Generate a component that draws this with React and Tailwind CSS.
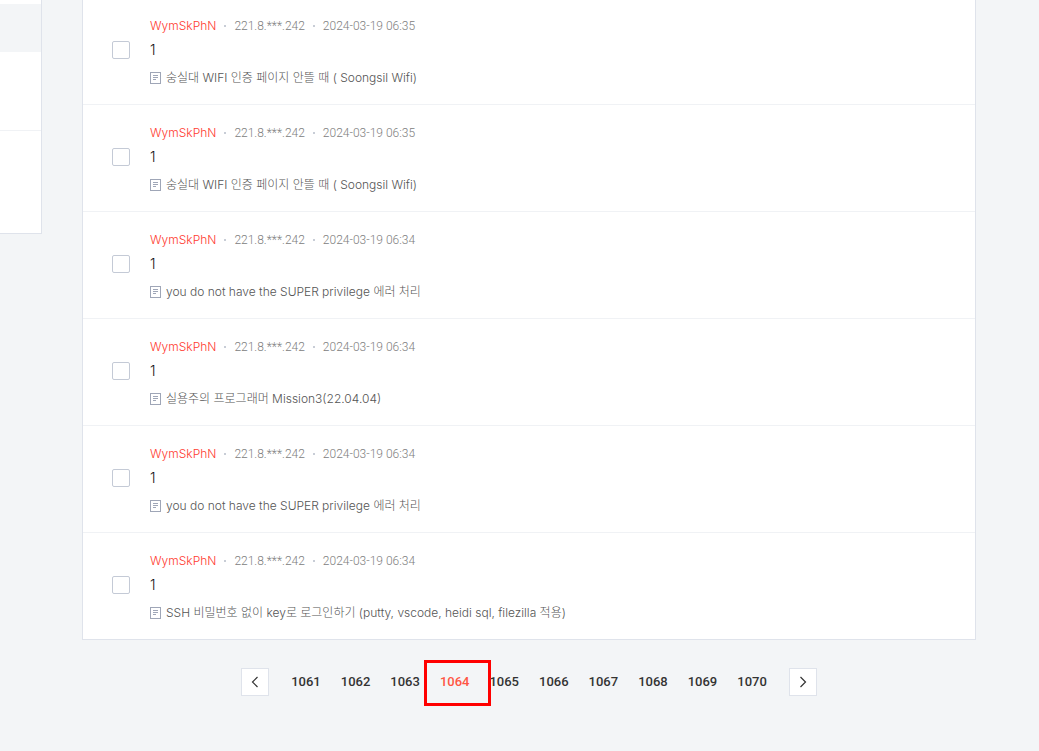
import React, { useState } from 'react';

const WIFI = '숭실대 WIFI 인증 페이지 안뜰 때 ( Soongsil Wifi)';
const SUPER = 'you do not have the SUPER privilege 에러 처리';

const comments = [
  { id: 1, time: '2024-03-19 06:35', post: WIFI },
  { id: 2, time: '2024-03-19 06:35', post: WIFI },
  { id: 3, time: '2024-03-19 06:34', post: SUPER },
  { id: 4, time: '2024-03-19 06:34', post: '실용주의 프로그래머 Mission3(22.04.04)' },
  { id: 5, time: '2024-03-19 06:34', post: SUPER },
  { id: 6, time: '2024-03-19 06:34', post: 'SSH 비밀번호 없이 key로 로그인하기 (putty, vscode, heidi sql, filezilla 적용)' },
];

const pages = [1061, 1062, 1063, 1064, 1065, 1066, 1067, 1068, 1069, 1070];
const currentPage = 1064;

function PostIcon() {
  return (
    <svg className="shrink-0" width="11" height="12" viewBox="0 0 11 12" fill="none" stroke="#9fa6b7" shapeRendering="crispEdges" aria-hidden="true">
      <path d="M.5 .5h10v11H.5z" />
      <path d="M3 3.5h5M3 5.5h5M3 7.5h3" />
    </svg>
  );
}

function Dot() {
  return <span className="mx-2 size-0.5 bg-[#c8cdd6]" />;
}

function ArrowButton({ label, d }) {
  return (
    <button type="button" aria-label={label} className="flex size-7 items-center justify-center border border-[#dfe3eb] bg-white">
      <svg width="8" height="12" viewBox="0 0 8 12" fill="none" stroke="#333" strokeWidth="1.2" aria-hidden="true">
        <path d={d} />
      </svg>
    </button>
  );
}

function CommentRow({ comment, checked, onToggle }) {
  return (
    <li className="flex h-[107px] items-center border-b border-[#f0f2f5] pb-0.5 pl-[29px] last:border-[#dfe3eb]">
      <input
        type="checkbox"
        aria-label={`WymSkPhN ${comment.time}`}
        checked={checked}
        onChange={onToggle}
        className="size-[18px] shrink-0 appearance-none rounded-xs border border-[#c4cad6] bg-white checked:bg-[#ff5544]"
      />
      <div className="ml-5 min-w-0 pt-1">
        <div className="flex h-5 items-center text-xs text-[#808080]">
          <a href="#" className="text-[#ff3b30]">WymSkPhN</a>
          <Dot />
          <span className="font-['Roboto',sans-serif]">221.8.***.242</span>
          <Dot />
          <time className="font-['Roboto',sans-serif]">{comment.time}</time>
        </div>
        <p className="mt-0.5 h-6 text-sm leading-6 text-[#111]">1</p>
        <a href="#" className="mt-1.5 flex h-5 items-center gap-[5px] text-xs text-[#555]">
          <PostIcon />
          <span>{comment.post}</span>
        </a>
      </div>
    </li>
  );
}

export default function App() {
  const [selected, setSelected] = useState([]);

  const toggle = (id) =>
    setSelected((prev) => (prev.includes(id) ? prev.filter((x) => x !== id) : [...prev, id]));

  return (
    <div className="flex min-h-screen items-start gap-10 overflow-hidden bg-[#f3f5f7] pr-[63px] font-['Inter','Noto_Sans_CJK_KR',sans-serif] font-light">
      {/* Side menu */}
      <aside className="w-[42px] shrink-0 border-r border-b border-[#dfe3eb] bg-white pt-1">
        <div className="h-12 bg-[#f3f5f7]" />
        <div className="h-[79px] border-b border-[#f0f2f5]" />
        <div className="h-[102px]" />
      </aside>

      <main className="-mt-0.5 min-w-0 flex-1">
        <ul className="border-x border-[#dfe3eb] bg-white">
          {comments.map((comment) => (
            <CommentRow
              key={comment.id}
              comment={comment}
              checked={selected.includes(comment.id)}
              onToggle={() => toggle(comment.id)}
            />
          ))}
        </ul>

        {/* Pagination */}
        <nav aria-label="Pages" className="mt-7 flex items-center justify-center gap-3">
          <ArrowButton label="Previous" d="M6.5 1 1.5 6l5 5" />
          <ol className="flex font-['Roboto',sans-serif] text-[13px] leading-5 font-medium text-[#333]">
            {pages.map((page) => (
              <li key={page} className="relative px-2.5">
                {page === currentPage ? (
                  <>
                    <a href="#" aria-current="page" className="text-[#ff5544]">{page}</a>
                    <span className="pointer-events-none absolute -top-3 -left-1.5 h-[46px] w-[67px] border-3 border-[#ff0000]" />
                  </>
                ) : (
                  <a href="#">{page}</a>
                )}
              </li>
            ))}
          </ol>
          <ArrowButton label="Next" d="m1.500 1 5 5-5 5" />
        </nav>
      </main>
    </div>
  );
}
